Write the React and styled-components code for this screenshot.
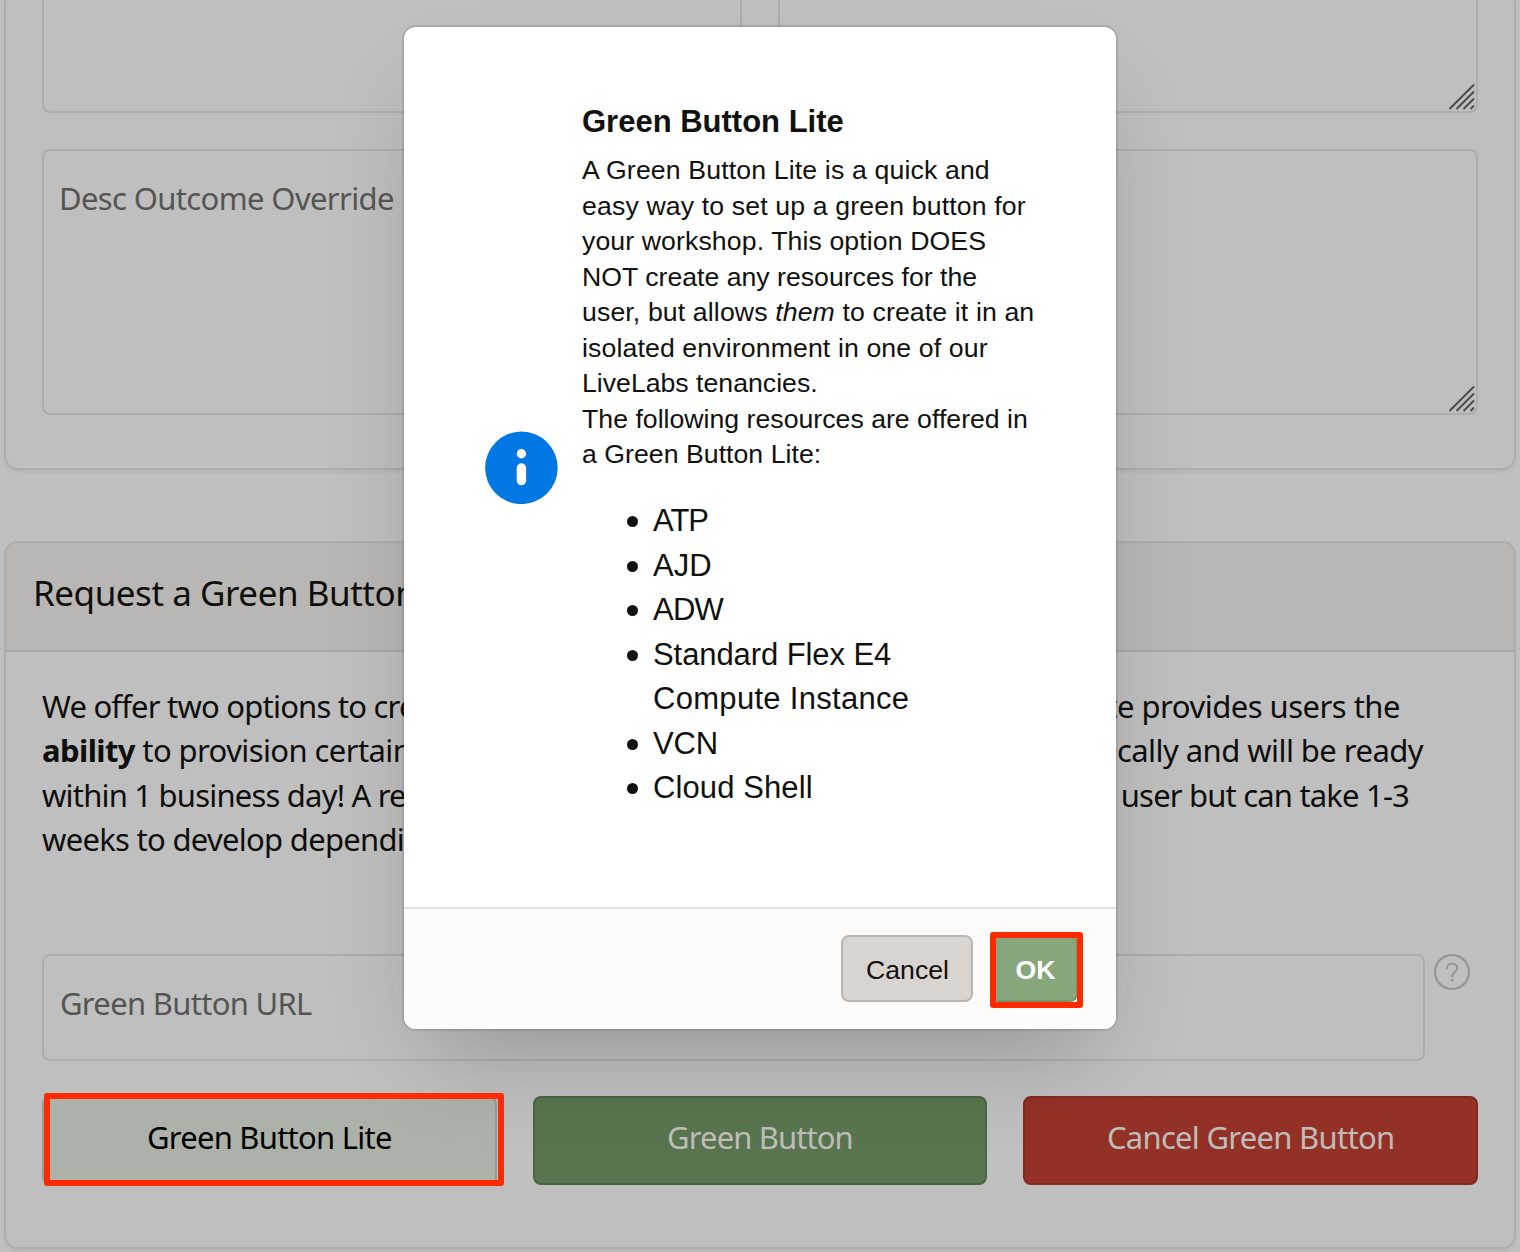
import React from "react";
import styled, { createGlobalStyle, css } from "styled-components";

const GlobalStyle = createGlobalStyle`
  *, *::before, *::after { box-sizing: border-box; }
  body { margin: 0; background: #bfbfbf; overflow: hidden; }
`;

const pageFont = '"Noto Sans", "Open Sans", sans-serif';
const dialogFont = '"Liberation Sans", Arial, sans-serif';
const line = "#adadad";

const Page = styled.main`
  position: relative;
  display: flex;
  flex-direction: column;
  gap: 71px;
  width: 1520px;
  height: 1252px;
  padding: 0 4px;
  overflow: hidden;
  background: #bfbfbf;
  color: #0e0e0c;
  font: 400 31px/44.44px ${pageFont};
`;

const Panel = styled.section`
  flex: none;
  border: 2px solid ${line};
  border-radius: 14px;
  box-shadow: 0 4px 4px -2px rgba(0, 0, 0, 0.06);
  overflow: hidden;
  ${(p) =>
    p.$cut &&
    css`
      border-top: 0;
      border-top-left-radius: 0;
      border-top-right-radius: 0;
    `}
`;

const FieldGrid = styled.div`
  display: grid;
  grid-template-columns: 1fr 1fr;
  gap: 36px;
  padding: 0 36px 53px;
`;

const TextArea = styled.div`
  position: relative;
  grid-column: ${(p) => (p.$wide ? "1 / -1" : "auto")};
  height: ${(p) => (p.$wide ? 266 : 113)}px;
  padding: 25px 15px;
  border: 2px solid ${line};
  border-radius: 8px;
  ${(p) =>
    p.$cut &&
    css`
      border-top: 0;
      border-top-left-radius: 0;
      border-top-right-radius: 0;
    `}
`;

const Grip = styled.svg`
  position: absolute;
  right: 1px;
  bottom: 1px;
  width: 26px;
  height: 26px;
`;

const Run = styled.span`
  white-space: nowrap;
  letter-spacing: ${(p) => p.$ls || 0}px;
`;

const Label = styled(Run)`
  display: block;
  color: #555553;
`;

const PanelHeader = styled.header`
  display: flex;
  align-items: center;
  height: 109px;
  padding: 0 28px 6px 27px;
  border-bottom: 2px solid #a9a8a6;
  background: #b8b7b5;
  font-size: 35px;
`;

const PanelBody = styled.div`
  display: flex;
  flex-direction: column;
  height: 595px;
  padding: 32px 36px 0;
`;

const Copy = styled.div`
  height: 178px;
  margin-bottom: 92px;
`;

const CopyLine = styled.div`
  display: flex;
  justify-content: space-between;
  padding-right: ${(p) => p.$end || 0}px;
`;

const InputRow = styled.div`
  display: flex;
  align-items: flex-start;
  gap: 9px;
`;

const TextInput = styled.div`
  width: 1383px;
  height: 107px;
  padding: 25px 16px;
  border: 2px solid ${line};
  border-radius: 8px;
`;

const HelpIcon = styled.svg`
  width: 36px;
  height: 36px;
`;

const Actions = styled.div`
  display: grid;
  grid-template-columns: repeat(3, 1fr);
  gap: 36px;
  margin-top: 35px;
`;

const tones = {
  light: css`
    background: #acb1a9;
    border-color: #979c95;
    color: #000;
  `,
  green: css`
    background: #58754f;
    border-color: #4b6544;
    color: #bfbdba;
  `,
  red: css`
    background: #943127;
    border-color: #812a21;
    color: #bfbdba;
  `,
};

const ActionButton = styled.button`
  width: 100%;
  height: 89px;
  padding: 0 0 6px;
  border: 2px solid;
  border-radius: 8px;
  font: inherit;
  ${(p) => tones[p.$tone]}
`;

const Marked = styled.div`
  position: relative;
  display: flex;
`;

const Marker = styled.span`
  position: absolute;
  z-index: 3;
  top: ${(p) => p.$top}px;
  left: ${(p) => p.$left}px;
  width: ${(p) => p.$w}px;
  height: ${(p) => p.$h}px;
  border: 6px solid #ff2a00;
  border-radius: 3px;
`;

const Overlay = styled.div`
  position: absolute;
  inset: 0;
  display: flex;
  justify-content: center;
  align-items: flex-start;
  padding-top: 27px;
`;

const Dialog = styled.section`
  display: flex;
  flex-direction: column;
  width: 712px;
  height: 1002px;
  border-radius: 12px;
  background: #fff;
  color: #11110f;
  font-family: ${dialogFont};
  box-shadow: 0 0 0 2px rgba(0, 0, 0, 0.1), 0 46px 89px -25px rgba(0, 0, 0, 0.22);
`;

const DialogBody = styled.div`
  display: flex;
  gap: 24.5px;
  height: 880px;
  padding: 0 80px 0 80.5px;
`;

const InfoIcon = styled.svg`
  flex: none;
  align-self: center;
  width: 73px;
  height: 73px;
`;

const DialogText = styled.div`
  flex: 1;
  padding-top: 73px;
`;

const Title = styled.h2`
  margin: 0 0 8.5px;
  font: 700 31px/44.44px ${dialogFont};
`;

const Paragraph = styled.p`
  margin: 0;
  font-size: 26.67px;
  line-height: 35.56px;
`;

const TextLine = styled(Run)`
  display: block;
`;

const List = styled.ul`
  margin: 26.4px 0 0;
  padding: 0 0 0 45px;
  list-style: none;
  font-size: 31px;
  line-height: 44.5px;
`;

const Item = styled.li`
  display: flex;
  gap: 15px;

  &::before {
    content: "";
    flex: none;
    width: 11px;
    height: 11px;
    margin-top: 17px;
    border-radius: 50%;
    background: #11110f;
  }
`;

const DialogFooter = styled.footer`
  display: flex;
  justify-content: flex-end;
  align-items: flex-start;
  gap: 18px;
  height: 122px;
  padding: 26px 38px 0;
  border-top: 2px solid #e0e0df;
  border-radius: 0 0 12px 12px;
  background: #fcfbf9;
`;

const DialogButton = styled.button`
  width: ${(p) => (p.$primary ? 87 : 132)}px;
  height: 67px;
  padding: 4px 0 0 ${(p) => (p.$primary ? 2 : 1)}px;
  border: 2px solid ${(p) => (p.$primary ? "#77946e" : "#bab5b1")};
  border-radius: 8px;
  background: ${(p) => (p.$primary ? "#86a67c" : "#d9d4d0")};
  color: ${(p) => (p.$primary ? "#fff" : "#11110f")};
  font: ${(p) => (p.$primary ? 700 : 400)} 26.67px ${dialogFont};
`;

const ResizeGrip = () => (
  <Grip viewBox="0 0 26 26" fill="none" stroke="#4c4c4c" strokeWidth="2">
    <path d="M0.5 25 L25 0.5 M7.5 25 L25 7.5 M14.5 25 L25 14.5 M21.5 25 L25 21.5" />
  </Grip>
);

const intro = [
  ["A Green Button Lite is a quick and", 0.14],
  ["easy way to set up a green button for", 0.14],
  ["your workshop. This option DOES", 0.1],
  ["NOT create any resources for the", 0],
  [<>user, but allows <em>them</em> to create it in an</>, 0.12],
  ["isolated environment in one of our", 0.12],
  ["LiveLabs tenancies.", 0],
  ["The following resources are offered in", 0.01],
  ["a Green Button Lite:", 0.03],
];

const resources = [
  [["ATP", -1]],
  [["AJD", 0]],
  [["ADW", -0.8]],
  [["Standard Flex E4", -0.08], ["Compute Instance", 0.3]],
  [["VCN", -0.1]],
  [["Cloud Shell", 0.1]],
];

export default function App() {
  return (
    <Page>
      <GlobalStyle />
      <Panel $cut>
        <FieldGrid>
          <TextArea $cut />
          <TextArea $cut>
            <ResizeGrip />
          </TextArea>
          <TextArea $wide>
            <Label $ls={-0.64}>Desc Outcome Override</Label>
            <ResizeGrip />
          </TextArea>
        </FieldGrid>
      </Panel>

      <Panel>
        <PanelHeader>
          <Run $ls={-0.46}>Request a Green Button</Run>
        </PanelHeader>
        <PanelBody>
          <Copy>
            <CopyLine $end={78}>
              <Run $ls={-0.79}>We offer two options to create</Run>
              <Run $ls={-0.51}>te provides users the</Run>
            </CopyLine>
            <CopyLine $end={55}>
              <Run $ls={-0.6}>
                <b>ability</b> to provision certain
              </Run>
              <Run $ls={-0.55}>cally and will be ready</Run>
            </CopyLine>
            <CopyLine $end={69}>
              <Run $ls={-0.8}>within 1 business day! A req</Run>
              <Run $ls={-0.82}>user but can take 1-3</Run>
            </CopyLine>
            <CopyLine>
              <Run $ls={-0.71}>weeks to develop depending</Run>
            </CopyLine>
          </Copy>
          <InputRow>
            <TextInput>
              <Label $ls={-0.7}>Green Button URL</Label>
            </TextInput>
            <HelpIcon viewBox="0 0 36 36" fill="none" stroke="#929292" strokeWidth="1.8">
              <circle cx="18" cy="18" r="17" strokeWidth="2" />
              <path d="M12.9 14.6 C12.9 7.9 23.3 8 23.3 14.3 C23.3 18.2 18.2 17.8 18.2 22.6" strokeLinecap="round" />
              <circle cx="18.2" cy="26.2" r="1.3" fill="#929292" stroke="none" />
            </HelpIcon>
          </InputRow>
          <Actions>
            <Marked>
              <ActionButton $tone="light">
                <Run $ls={-0.75}>Green Button Lite</Run>
              </ActionButton>
              <Marker $top={-3} $left={2} $w={460} $h={93} />
            </Marked>
            <ActionButton $tone="green">
              <Run $ls={-0.9}>Green Button</Run>
            </ActionButton>
            <ActionButton $tone="red">
              <Run $ls={-0.72}>Cancel Green Button</Run>
            </ActionButton>
          </Actions>
        </PanelBody>
      </Panel>

      <Overlay>
        <Dialog role="dialog">
          <DialogBody>
            <InfoIcon viewBox="0 0 73 73">
              <circle cx="36.4" cy="36.8" r="36.3" fill="#0077e2" />
              <circle cx="36.4" cy="22.8" r="4.7" fill="#fff" />
              <rect x="31.7" y="32.3" width="9.4" height="22" rx="4.7" fill="#fff" />
            </InfoIcon>
            <DialogText>
              <Title>Green Button Lite</Title>
              <Paragraph>
                {intro.map(([text, ls], i) => (
                  <TextLine key={i} $ls={ls}>{text}</TextLine>
                ))}
              </Paragraph>
              <List>
                {resources.map((rows, i) => (
                  <Item key={i}>
                    <div>
                      {rows.map(([text, ls]) => (
                        <TextLine key={text} $ls={ls}>{text}</TextLine>
                      ))}
                    </div>
                  </Item>
                ))}
              </List>
            </DialogText>
          </DialogBody>
          <DialogFooter>
            <DialogButton>Cancel</DialogButton>
            <Marked>
              <DialogButton $primary>OK</DialogButton>
              <Marker $top={-3} $left={-1} $w={93} $h={76} />
            </Marked>
          </DialogFooter>
        </Dialog>
      </Overlay>
    </Page>
  );
}
